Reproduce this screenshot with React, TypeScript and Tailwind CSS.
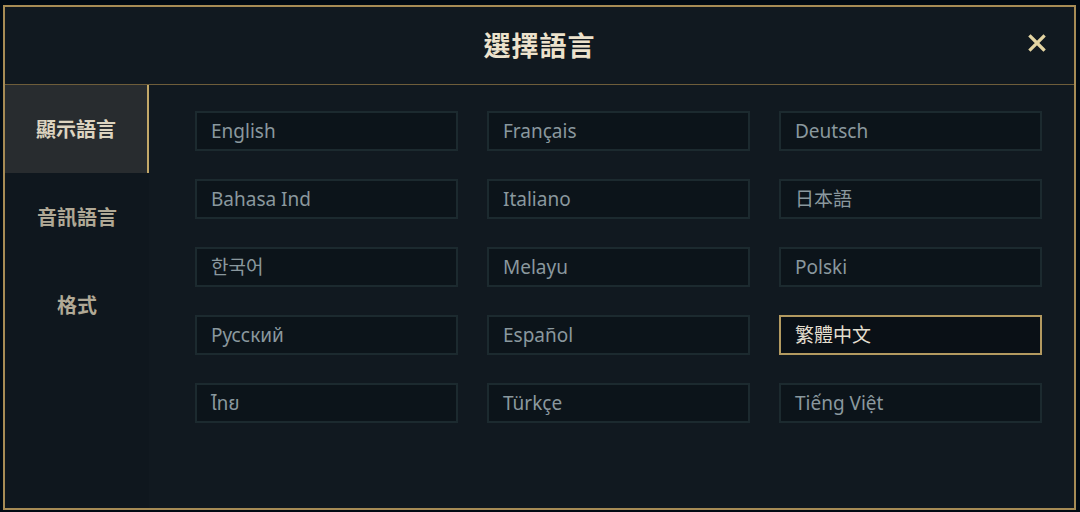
import React from "react";

const langs = [
  "English", "Français", "Deutsch",
  "Bahasa Ind", "Italiano", "日本語",
  "한국어", "Melayu", "Polski",
  "Русский", "Español", "繁體中文",
  "ไทย", "Türkçe", "Tiếng Việt",
];

const font = {
  fontFamily: '"Noto Sans", "Noto Sans CJK TC", "Noto Sans Thai", sans-serif',
};

export default function App() {
  return (
    <div className="w-[1080px] h-[512px] bg-[#010a13] overflow-hidden pt-[5px] pl-[3px]" style={font}>
      <div className="w-[1073px] h-[505px] border-2 border-[#a68b55] bg-[#111920] flex flex-col">
        <div className="h-[78px] shrink-0 border-b border-[#6e5d3a] relative flex items-center justify-center">
          <div
            className="text-[27px] font-bold text-[#ece2cc] tracking-[1px] mt-[-1px]"
            style={{ fontFamily: '"Noto Sans CJK TC", sans-serif' }}
          >
            選擇語言
          </div>
          <div className="absolute right-[28px] top-[27px]">
            <svg width="18" height="18" viewBox="0 0 18 18">
              <path d="M2.5 2.5 L15.5 15.5 M15.5 2.5 L2.5 15.5" stroke="#e3d4a2" strokeWidth="3.2" strokeLinecap="square" />
            </svg>
          </div>
        </div>
        <div className="flex flex-1 min-h-0">
          <div className="w-[144px] shrink-0 bg-[#0f171e] flex flex-col" style={{ fontFamily: '"Noto Sans CJK TC", sans-serif' }}>
            <div className="h-[88px] bg-[#282c2f] border-r-2 border-[#c3a868] flex items-center justify-center text-[20px] font-bold text-[#ddd4c0]">
              顯示語言
            </div>
            <div className="h-[88px] flex items-center justify-center text-[20px] font-bold text-[#b0a996]">
              音訊語言
            </div>
            <div className="h-[88px] flex items-center justify-center text-[20px] font-bold text-[#b0a996]">
              格式
            </div>
          </div>
          <div className="flex-1 pl-[46px] pt-[26px]">
            <div className="grid grid-cols-[263px_263px_263px] gap-x-[29px] gap-y-[28px]">
              {langs.map((l) => {
                const sel = l === "繁體中文";
                return (
                  <div
                    key={l}
                    className={
                      sel
                        ? "h-[40px] border-2 border-[#b39a60] bg-[#0a1016] flex items-center pl-[14px] text-[19px] text-[#e4dfd0]"
                        : "h-[40px] border-2 border-[#1c2a2f] bg-[#0c141a] flex items-center pl-[14px] text-[19px] text-[#8a989e]"
                    }
                  >
                    {l}
                  </div>
                );
              })}
            </div>
          </div>
        </div>
      </div>
    </div>
  );
}
